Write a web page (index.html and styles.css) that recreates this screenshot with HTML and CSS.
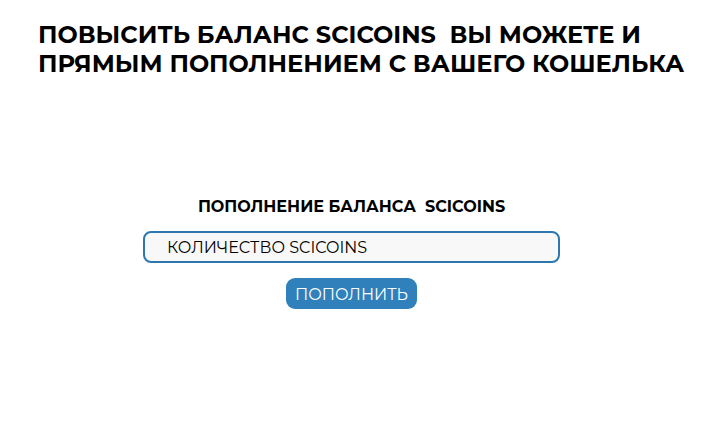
FILE: index.html
```html
<!DOCTYPE html>
<html lang="ru">
<head>
<meta charset="utf-8">
<meta name="viewport" content="width=device-width, initial-scale=1">
<title>Пополнение баланса</title>
<link rel="stylesheet" href="styles.css">
</head>
<body>
<main class="page">
  <h1 class="title">ПОВЫСИТЬ БАЛАНС SCICOINS&nbsp; ВЫ МОЖЕТЕ И<br>ПРЯМЫМ ПОПОЛНЕНИЕМ С ВАШЕГО КОШЕЛЬКА</h1>
  <form class="topup">
    <label class="topup-label" for="amount">ПОПОЛНЕНИЕ БАЛАНСА&nbsp; SCICOINS</label>
    <input class="topup-input" id="amount" type="text" placeholder="КОЛИЧЕСТВО SCICOINS">
    <button class="topup-button" type="button">ПОПОЛНИТЬ</button>
  </form>
</main>
</body>
</html>
```
FILE: styles.css
```css
* {
  box-sizing: border-box;
}

body {
  margin: 0;
  background: #fff;
  color: #000;
  font-family: Montserrat, Inter, "Open Sans", sans-serif;
}

.page {
  padding: 20px 0 20px 38px;
}

.title {
  margin: 0;
  font-size: 24px;
  line-height: 29px;
  font-weight: 700;
}

.topup {
  display: flex;
  flex-direction: column;
  align-items: center;
  margin: 119px 38px 0 0;
}

.topup-label {
  font-size: 16px;
  line-height: 20px;
  font-weight: 700;
}

.topup-input {
  width: 100%;
  max-width: 417px;
  height: 32px;
  margin-top: 14px;
  padding: 0 22px;
  border: 2px solid #2e77ae;
  border-radius: 8px;
  background: #f8f8f8;
  color: #000;
  font: inherit;
  font-size: 16px;
}

.topup-input::placeholder {
  color: #000;
  opacity: 1;
}

.topup-button {
  margin-top: 15px;
  padding: 7px 9px 4px;
  border: 0;
  border-radius: 9px;
  background: #2f80bb;
  color: #fff;
  font: inherit;
  font-size: 16px;
  line-height: 20px;
}
```
